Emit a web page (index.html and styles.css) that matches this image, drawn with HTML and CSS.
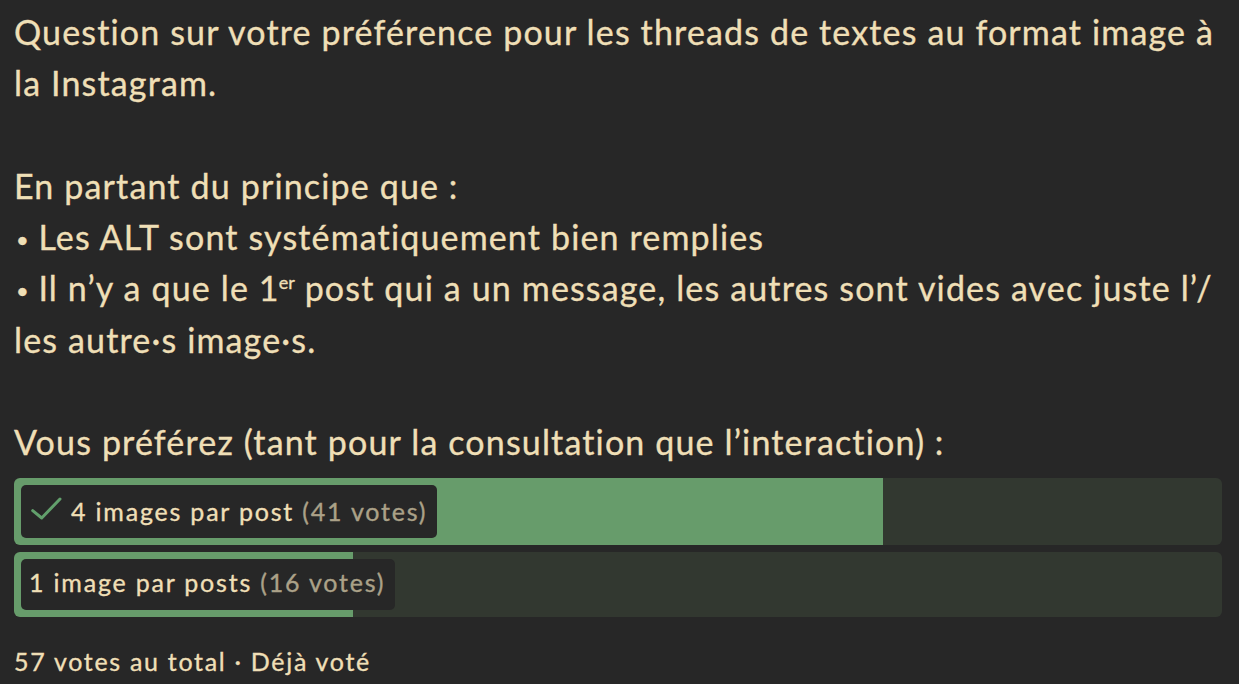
FILE: index.html
```html
<!DOCTYPE html>
<html lang="fr">
<head>
<meta charset="utf-8">
<link rel="stylesheet" href="styles.css">
</head>
<body>
<div class="status">
  <div class="content">
    <p>Question sur votre préférence pour les threads de textes au format image à la Instagram.</p>
    <p>En partant du principe que&#8239;:<br><span class="bullet">•</span>&#8239;Les ALT sont systématiquement bien remplies<br><span class="bullet">•</span>&#8239;Il n’y a que le 1<span class="sup">er</span> post qui a un message, les autres sont vides avec juste l’/<wbr>les autre·s image·s.</p>
    <p>Vous préférez (tant pour la consultation que l’interaction)&#8239;:</p>
  </div>
  <ul class="poll">
    <li class="option" style="--p:71.93%">
      <span class="label label-voted"><svg class="check" width="34" height="37" viewBox="0 0 34 37"><path d="M3.7 17.7 L12.7 25 L31 6" fill="none" stroke="#62a06c" stroke-width="3" stroke-linecap="round" stroke-linejoin="round"/></svg>4 images par post <span class="count">(41 votes)</span></span>
    </li>
    <li class="option" style="--p:28.07%">
      <span class="label">1 image par posts <span class="count">(16 votes)</span></span>
    </li>
  </ul>
  <div class="footer">57 votes au total · Déjà voté</div>
</div>
</body>
</html>
```
FILE: styles.css
```css
html, body {
  margin: 0;
  padding: 0;
  background: #272727;
}
body {
  font-family: "Lato", "Open Sans", sans-serif;
  color: #efdfb6;
  -webkit-text-stroke: 0.35px currentColor;
}
.status {
  width: 1208px;
  padding: 6px 17px 0 14px;
}
.content p {
  margin: 0 0 51.25px;
  font-size: 34px;
  line-height: 51.25px;
  letter-spacing: 1.15px;
}
.content p:last-child {
  margin-bottom: 11px;
}
.bullet {
  font-size: 22px;
  line-height: 1;
  vertical-align: 2px;
  margin-left: 2px;
  letter-spacing: 0;
}
.sup {
  font-size: 18px;
  line-height: 1;
  vertical-align: 12px;
  margin-left: -1px;
  letter-spacing: 0;
}
.poll {
  list-style: none;
  margin: 0;
  padding: 0;
  display: flex;
  flex-direction: column;
  gap: 7px;
}
.option {
  display: flex;
  padding: 7px;
  border-radius: 6px;
  background: linear-gradient(to right, #679c6b 0, #679c6b var(--p), #323830 var(--p), #323830 100%);
}
.label {
  display: flex;
  align-items: flex-start;
  background: #272727;
  border-radius: 5px;
  padding: 5px 10px 9px 8px;
  font-size: 25px;
  line-height: 37px;
  letter-spacing: 1.8px;
  white-space: pre;
}
.label-voted {
  padding-top: 8px;
  padding-bottom: 8px;
}
.check {
  display: block;
  flex: none;
  margin-right: 8px;
}
.count {
  color: #aba188;
}
.footer {
  margin-top: 26px;
  font-size: 25px;
  line-height: 37px;
  letter-spacing: 1.7px;
}
```
